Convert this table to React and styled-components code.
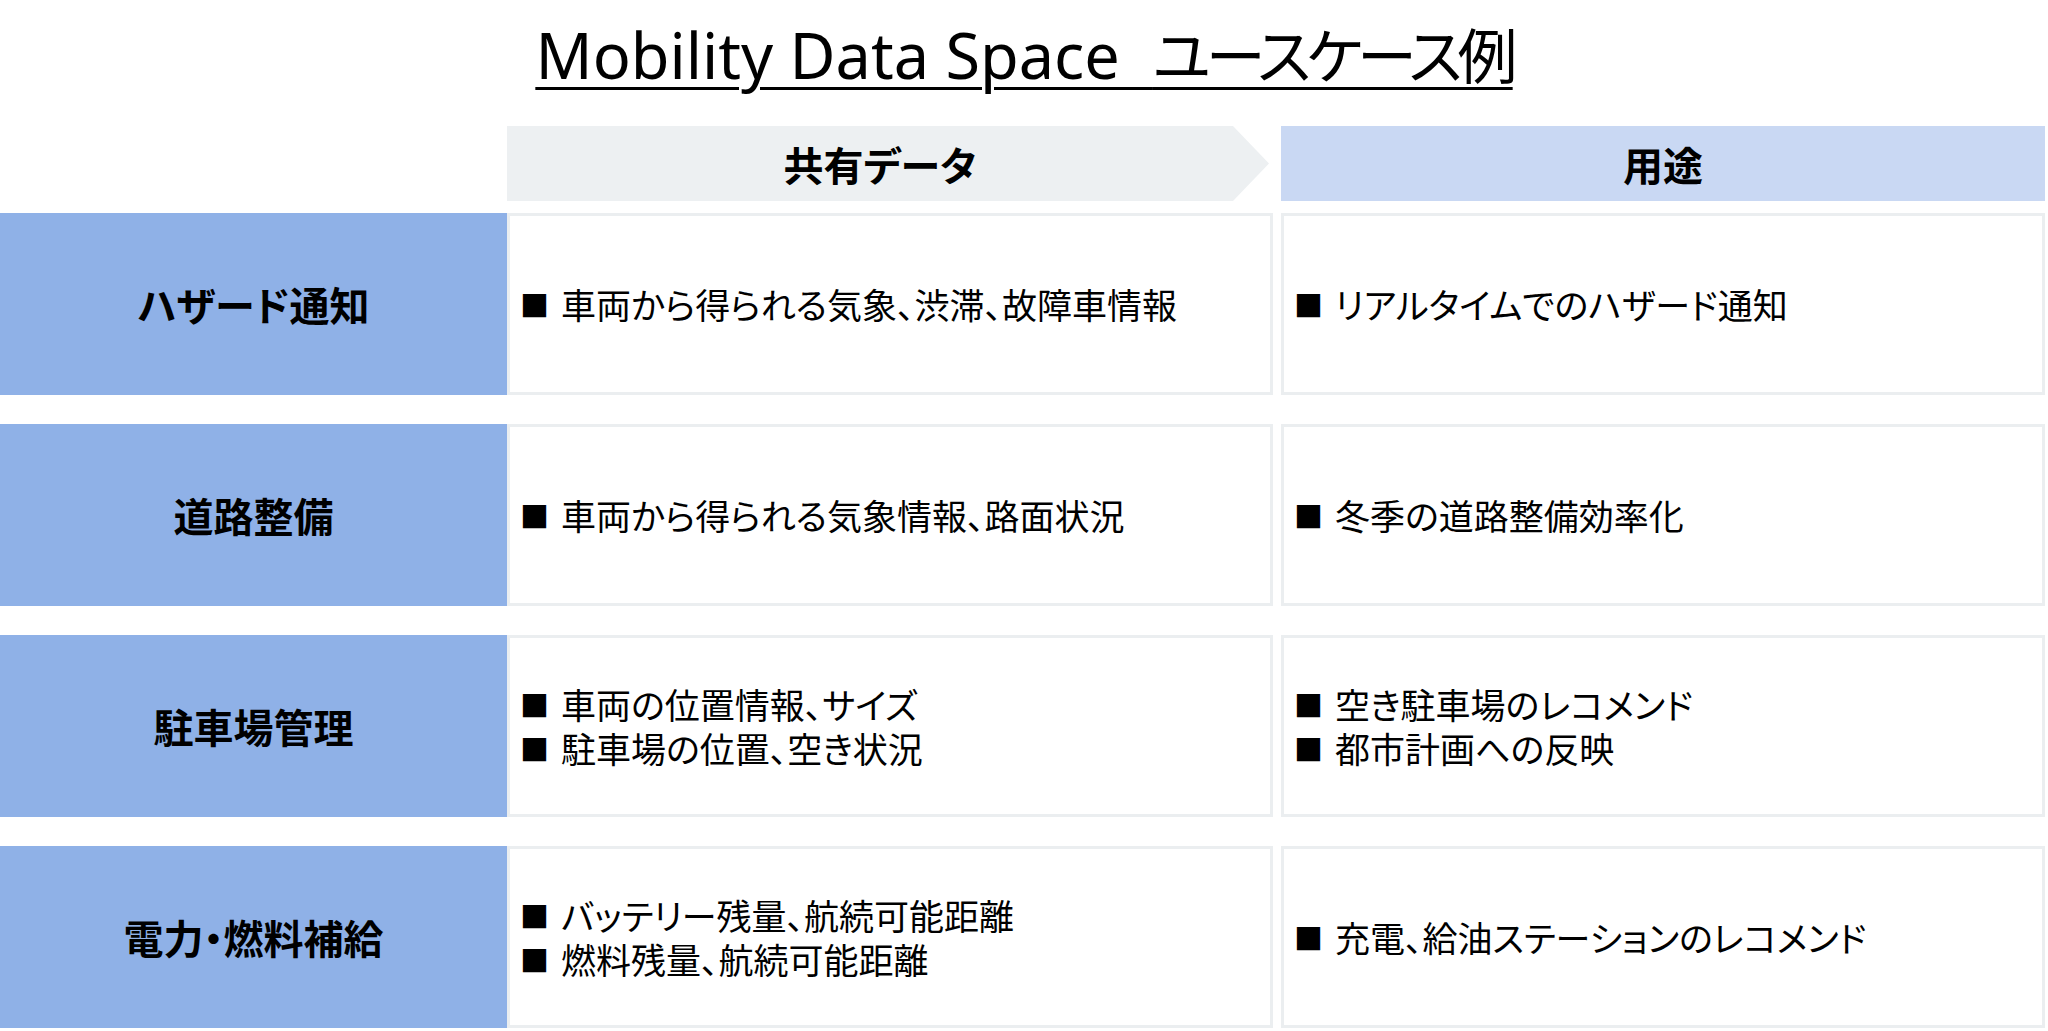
import React from 'react';
import styled, { createGlobalStyle } from 'styled-components';

const GlobalStyle = createGlobalStyle`
  html, body {
    margin: 0;
    padding: 0;
    background: #ffffff;
  }
  body {
    font-family: "Noto Sans", "Noto Sans CJK JP", sans-serif;
    color: #000;
  }
`;

const Page = styled.div`
  width: 2048px;
  height: 1031px;
  overflow: hidden;
  background: #fff;
  font-feature-settings: "palt";
`;

const Title = styled.h1`
  margin: 19px 0 0;
  height: 72px;
  line-height: 72px;
  text-align: center;
  font-family: "Noto Sans", "Noto Sans CJK JP", sans-serif;
  font-weight: 400;
  text-decoration: underline;
  text-decoration-thickness: 3px;
  text-underline-offset: 8px;
`;

const TitlePart = styled.span`
  font-size: ${p => p.$size}px;
  letter-spacing: ${p => p.$spacing}px;
  text-decoration: inherit;
`;

const HeaderRow = styled.div`
  display: flex;
  margin-top: 35px;
  padding-left: 507px;
  gap: 12px;
  height: 75px;
`;

const HeaderCell = styled.div`
  display: flex;
  align-items: center;
  justify-content: center;
  width: ${p => p.$width}px;
  background: ${p => p.$bg};
  font-family: "Noto Sans CJK JP", sans-serif;
  font-size: 40px;
  font-weight: 700;
  padding-right: ${p => (p.$arrow ? 16 : 0)}px;
  box-sizing: border-box;
  clip-path: ${p =>
    p.$arrow
      ? 'polygon(0 0, calc(100% - 36px) 0, 100% 50%, calc(100% - 36px) 100%, 0 100%)'
      : 'none'};
`;

const Rows = styled.div`
  display: flex;
  flex-direction: column;
  gap: 29px;
  margin-top: 12px;
`;

const Row = styled.div`
  display: flex;
  height: 182px;
`;

const Label = styled.div`
  display: flex;
  align-items: center;
  justify-content: center;
  width: 507px;
  flex-shrink: 0;
  background: #8fb1e7;
  font-family: "Noto Sans CJK JP", sans-serif;
  font-size: 40px;
  font-weight: 700;
`;

const Cells = styled.div`
  display: flex;
  gap: 8px;
`;

const Cell = styled.div`
  display: flex;
  flex-direction: column;
  justify-content: center;
  width: ${p => p.$width}px;
  box-sizing: border-box;
  border: 3px solid #ebeef0;
  padding-left: 10px;
  background: #fff;
`;

const Item = styled.div`
  display: flex;
  align-items: center;
  height: 44px;
  font-family: "Noto Sans CJK JP", sans-serif;
  font-size: 35px;
  line-height: 44px;
  font-weight: 400;
  white-space: nowrap;
`;

const Bullet = styled.span`
  font-size: 29px;
  margin-right: 12px;
  line-height: 1;
`;

const rows = [
  {
    label: 'ハザード通知',
    data: ['車両から得られる気象、渋滞、故障車情報'],
    use: ['リアルタイムでのハザード通知'],
  },
  {
    label: '道路整備',
    data: ['車両から得られる気象情報、路面状況'],
    use: ['冬季の道路整備効率化'],
  },
  {
    label: '駐車場管理',
    data: ['車両の位置情報、サイズ', '駐車場の位置、空き状況'],
    use: ['空き駐車場のレコメンド', '都市計画への反映'],
  },
  {
    label: '電力・燃料補給',
    data: ['バッテリー残量、航続可能距離', '燃料残量、航続可能距離'],
    use: ['充電、給油ステーションのレコメンド'],
  },
];

function List({ items }) {
  return items.map(text => (
    <Item key={text}>
      <Bullet>■</Bullet>
      {text}
    </Item>
  ));
}

export default function App() {
  return (
    <Page>
      <GlobalStyle />
      <Title>
        <TitlePart $size={63} $spacing={0}>Mobility Data Space&nbsp;&nbsp;</TitlePart>
        <TitlePart $size={60} $spacing={-5}>ユースケース例</TitlePart>
      </Title>
      <HeaderRow>
        <HeaderCell $width={762} $bg="#edf0f2" $arrow>
          共有データ
        </HeaderCell>
        <HeaderCell $width={764} $bg="#c9d8f3">
          用途
        </HeaderCell>
      </HeaderRow>
      <Rows>
        {rows.map(r => (
          <Row key={r.label}>
            <Label>{r.label}</Label>
            <Cells>
              <Cell $width={766}>
                <List items={r.data} />
              </Cell>
              <Cell $width={764}>
                <List items={r.use} />
              </Cell>
            </Cells>
          </Row>
        ))}
      </Rows>
    </Page>
  );
}
